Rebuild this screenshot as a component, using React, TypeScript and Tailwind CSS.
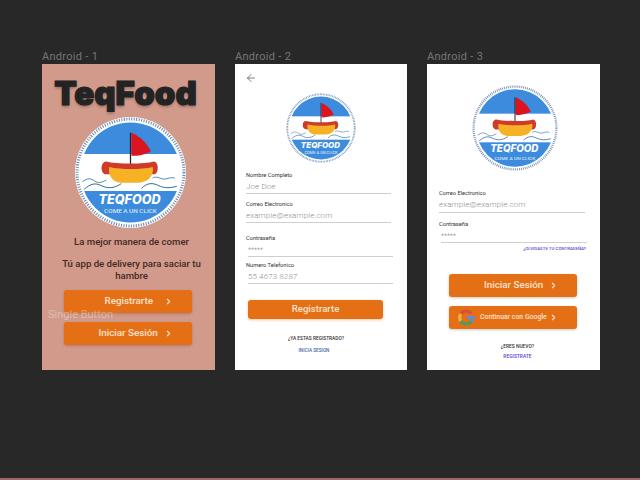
import { ChevronRight, ArrowLeft } from 'lucide-react';

function Logo({ className }: { className: string }) {
  return (
    <svg viewBox="0 0 120 120" className={className}>
      <defs>
        <clipPath id="logo-disc">
          <circle cx="60" cy="60" r="54" />
        </clipPath>
      </defs>
      <circle cx="60" cy="60" r="60" fill="#ffffff" />
      <circle cx="60" cy="60" r="57.8" fill="none" stroke="#6f8db3" strokeWidth="3.2" strokeDasharray="1.2 1.5" />
      <g clipPath="url(#logo-disc)">
        <rect x="0" y="0" width="120" height="40" fill="#3d8bdc" />
        <rect x="0" y="80" width="120" height="40" fill="#3d8bdc" />
      </g>
      <path d="M60 17v36" stroke="#1c2438" strokeWidth="1.4" />
      <path d="M61 17 C71 21 78 29 82 37 C76 41 68 42 61 42 Z" fill="#dc1420" />
      <path d="M34 48 C44 51 76 51 85 48 C91 48 91 62 85 62 L34 62 C27 62 27 48 34 48 Z" fill="#cf3a2a" />
      <path d="M37 54 C50 57 72 57 84 54 C86 64 78 71 68 71 L50 71 C42 71 35 64 37 54 Z" fill="#f6b224" />
      <path d="M8 70 C13 66 17 66 21 69 C25 72 29 71 34 68" fill="none" stroke="#1f5e94" strokeWidth="0.8" />
      <path d="M10 78 C17 72 22 71 28 74 C34 77 42 78 50 72" fill="none" stroke="#1f5e94" strokeWidth="1" />
      <path d="M72 77 C78 71 84 71 90 74 C96 77 102 77 110 75" fill="none" stroke="#1f5e94" strokeWidth="1" />
      <path d="M84 66 C89 63 93 68 98 67 C102 66 104 65 108 66" fill="none" stroke="#1f5e94" strokeWidth="0.8" />
      <text x="59" y="94" textAnchor="middle" fill="#ffffff" fontFamily="Inter, sans-serif" fontWeight="800" fontStyle="italic" fontSize="14" textLength="67" lengthAdjust="spacingAndGlyphs">
        TEQFOOD
      </text>
      <text x="60" y="104" textAnchor="middle" fill="#cfe3f7" fontFamily="Roboto, sans-serif" fontWeight="500" fontSize="5.4" textLength="57" lengthAdjust="spacingAndGlyphs">
        COME A UN CLICK
      </text>
    </svg>
  );
}

function GoogleMark() {
  return (
    <svg viewBox="0 0 48 48" className="w-[17px] h-[17px] shrink-0">
      <path fill="none" stroke="#d9503f" strokeWidth="9" d="M38 13 A19 19 0 0 0 8 14" />
      <path fill="none" stroke="#e9b23c" strokeWidth="9" d="M8 14 A19 19 0 0 0 8 34" />
      <path fill="none" stroke="#4d9e57" strokeWidth="9" d="M8 34 A19 19 0 0 0 38 36" />
      <path fill="none" stroke="#5b8fd8" strokeWidth="9" d="M38 36 A19 19 0 0 0 43 24 L25 24" />
    </svg>
  );
}

function OrangeButton({ label, className }: { label: string; className: string }) {
  return (
    <div className={`flex items-center rounded-[3px] bg-[#e46f15] shadow-[0_1px_3px_rgba(0,0,0,0.2)] font-medium text-[#fde3cf] text-[9.8px] w-[128px] h-[23px] ${className}`}>
      <span>{label}</span>
      <ChevronRight className="w-[9px] h-[9px]" strokeWidth={3} />
    </div>
  );
}

function Field({ label, value, valueClass, lineClass, className = '' }: { label: string; value: string; valueClass: string; lineClass: string; className?: string }) {
  return (
    <div className={`flex flex-col ${className}`}>
      <span className="h-2 text-[5.7px] leading-2 text-[#333333]">{label}</span>
      <span className={`h-3 mt-0.5 leading-3 font-light text-[#8f8f8f] ${valueClass}`}>{value}</span>
      <div className={`h-px bg-[#cfcfcf] ${lineClass}`} />
    </div>
  );
}

function Frame({ title, className, children }: { title: string; className: string; children: React.ReactNode }) {
  return (
    <div className={`flex flex-col ${className}`}>
      <span className="h-[15px] leading-[15px] text-[11px] tracking-[0.3px] text-[#757575]">{title}</span>
      {children}
    </div>
  );
}

export default function App() {
  return (
    <div className="w-[640px] h-[480px] overflow-hidden bg-[#282828] flex flex-col font-['Roboto',sans-serif]">
      <div className="flex-1 flex gap-5 pl-[42px] pt-[49px]">
        <Frame title="Android - 1" className="w-[173px]">
          <div className="relative h-[306px] bg-[#d29a8b] flex flex-col items-center">
            <h1 className="mt-[9px] -ml-[6px] h-10 leading-10 text-[33px] font-black text-[#232323] font-['Inter',sans-serif] [-webkit-text-stroke:1.2px_#232323] [text-shadow:0_2px_3px_rgba(0,0,0,0.3)]">
              TeqFood
            </h1>
            <Logo className="mt-[4px] ml-[4px] w-[111px] h-[111px] shrink-0" />
            <p className="mt-[8px] ml-[6px] h-3 leading-3 text-[9.6px] text-[#432925] font-medium">La mejor manera de comer</p>
            <p className="mt-[10px] ml-[6px] w-[150px] text-center leading-3 text-[9.6px] text-[#432925] font-medium">
              Tú app de delivery para saciar tu hambre
            </p>
            <OrangeButton label="Registrarte" className="mt-[8px] -ml-[2px] pl-[41px] gap-[11px]" />
            <OrangeButton label="Iniciar Sesión" className="mt-[9px] -ml-[2px] pl-[35px] gap-[6px]" />
            <span className="absolute left-[6px] top-[243px] text-[11px] text-white/35">Single Button</span>
          </div>
        </Frame>

        <Frame title="Android - 2" className="w-[172px]">
          <div className="h-[306px] bg-white flex flex-col pl-[11px]">
            <ArrowLeft className="mt-2 -ml-[1px] w-3 h-3 text-[#555555]" strokeWidth={1.5} />
            <Logo className="mt-[9px] ml-[40px] w-[70px] h-[70px] shrink-0" />
            <Field className="mt-2" label="Nombre Completo" value="Joe Doe" valueClass="text-[8px] tracking-[0.1px]" lineClass="w-[145px]" />
            <Field className="mt-1.5" label="Correo Electronico" value="example@example.com" valueClass="text-[8px] tracking-[0.1px]" lineClass="w-[145px]" />
            <Field className="mt-[11px]" label="Contraseña" value="*****" valueClass="ml-0.5 text-[7px]" lineClass="ml-0.5 w-[145px]" />
            <Field className="mt-[4px]" label="Numero Telefonico" value="55 4673 8287" valueClass="ml-0.5 text-[8px] tracking-[0.1px]" lineClass="ml-0.5 w-[145px]" />
            <div className="mt-[16px] ml-0.5 w-[135px] h-[19px] rounded-[3px] bg-[#e46f15] shadow-[0_1px_3px_rgba(228,111,21,0.4)] flex items-center justify-center text-[9.6px] font-medium text-[#fde3cf]">
              Registrarte
            </div>
            <span className="mt-[16px] ml-[2px] w-[136px] text-center h-[8px] leading-2 text-[4.8px] font-medium text-[#333333]">¿YA ESTAS REGISTRADO?</span>
            <span className="mt-[4px] ml-[2px] w-[132px] text-center h-[8px] leading-2 text-[4.7px] font-medium text-[#3f6aa8]">INICIA SESION</span>
          </div>
        </Frame>

        <Frame title="Android - 3" className="w-[173px]">
          <div className="h-[306px] bg-white flex flex-col pl-3">
            <Logo className="mt-[21px] ml-[33px] w-[86px] h-[86px] shrink-0" />
            <Field className="mt-[18px]" label="Correo Electronico" value="example@example.com" valueClass="mt-[2px] text-[8px] tracking-[0.1px]" lineClass="mt-[1px] w-[146px]" />
            <Field className="mt-[7px]" label="Contraseña" value="*****" valueClass="ml-0.5 text-[7px]" lineClass="ml-0.5 w-[146px]" />
            <span className="mt-[2px] w-[147px] text-right h-[8px] leading-2 text-[4.4px] font-medium text-[#5a4ad0]">¿OLVIDASTE TU CONTRASEÑA?</span>
            <OrangeButton label="Iniciar Sesión" className="mt-[21px] ml-[10px] pl-[35px] gap-[6px]" />
            <div className="mt-[9px] ml-[10px] w-[128px] h-[23px] rounded-[3px] bg-[#e46f15] shadow-[0_1px_3px_rgba(0,0,0,0.2)] flex items-center pl-[9px] font-medium text-[#fde3cf]">
              <GoogleMark />
              <span className="ml-[5px] text-[6.9px]">Continuar con Google</span>
              <ChevronRight className="ml-[2px] w-[9px] h-[9px]" strokeWidth={3} />
            </div>
            <span className="mt-[13px] w-[157px] text-center h-[8px] leading-2 text-[4.9px] font-medium text-[#333333]">¿ERES NUEVO?</span>
            <span className="mt-[2px] w-[157px] text-center h-[8px] leading-2 text-[4.9px] font-medium text-[#5a4ad0]">REGISTRATE</span>
          </div>
        </Frame>
      </div>
      <div className="h-0.5 bg-[#a0646e]" />
    </div>
  );
}
